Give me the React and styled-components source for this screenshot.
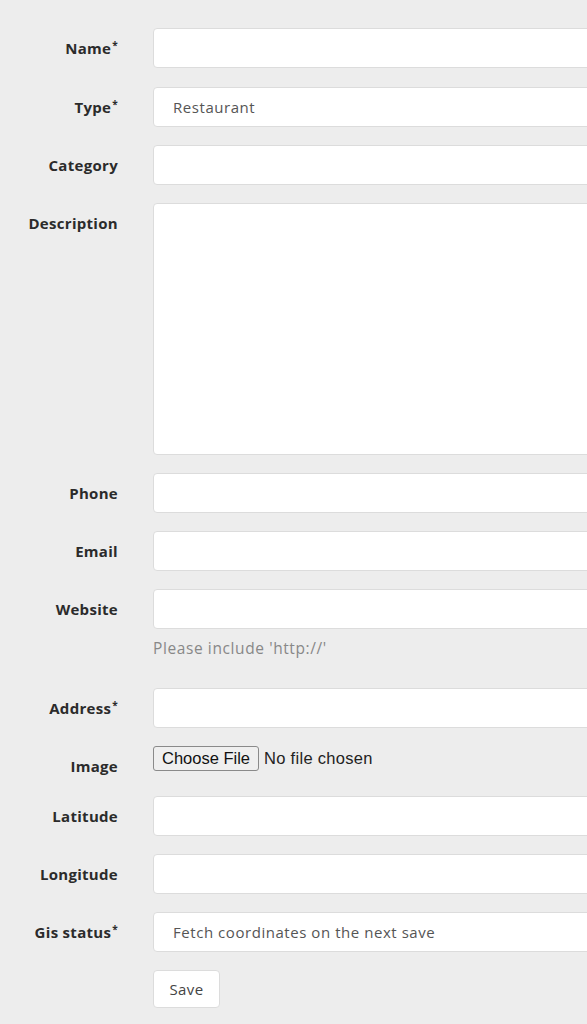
import styled, { createGlobalStyle } from "styled-components";

const Global = createGlobalStyle`
	html, body {
		margin: 0;
		background: #ededed;
		overflow: hidden;
	}
	body {
		font-family: "Open Sans", "Lato", sans-serif;
	}
`;

const Form = styled.form`
	width: 760px;
	padding: 28px 0 0 0;
	display: flex;
	flex-direction: column;
`;

const Row = styled.div`
	display: grid;
	grid-template-columns: 118px 1fr;
	column-gap: 35px;
	margin-bottom: ${(p) => p.$gap || 18}px;
`;

const Label = styled.label`
	text-align: right;
	font-weight: 700;
	font-size: 15px;
	line-height: 20px;
	color: #2b2b2b;
	padding-top: 10px;
	letter-spacing: 0.3px;
	white-space: nowrap;

	sup {
		font-size: 10px;
		vertical-align: top;
		position: relative;
		top: -3px;
		margin-left: 1px;
	}
`;

const Field = styled.div`
	display: flex;
	flex-direction: column;
`;

const Input = styled.input`
	box-sizing: border-box;
	height: 40px;
	width: 100%;
	border: 1px solid #dcdcdc;
	border-radius: 4px;
	background: #fff;
	padding: 0 19px;
	font-family: "Open Sans", "Lato", sans-serif;
	font-size: 15px;
	letter-spacing: 0.55px;
	color: #555;
	outline: none;
`;

const TextArea = styled.textarea`
	box-sizing: border-box;
	height: 252px;
	width: 100%;
	border: 1px solid #dcdcdc;
	border-radius: 4px;
	background: #fff;
	resize: none;
	outline: none;
`;

const Help = styled.div`
	font-size: 15.5px;
	line-height: 20px;
	letter-spacing: 0.6px;
	color: #888;
	margin-top: 9px;
`;

const FileRow = styled.div`
	height: 32px;
	display: flex;
	align-items: flex-start;
`;

const FileButton = styled.span`
	box-sizing: border-box;
	height: 25px;
	padding: 0 8px;
	display: inline-flex;
	align-items: center;
	font-family: "Liberation Sans", Arial, sans-serif;
	font-size: 16.5px;
	color: #111;
	background: #efefef;
	border: 1px solid #8a8a8a;
	border-radius: 3px;
`;

const FileText = styled.span`
	font-family: "Liberation Sans", Arial, sans-serif;
	font-size: 16.5px;
	line-height: 25px;
	letter-spacing: 0.3px;
	color: #222;
	margin-left: 5px;
`;

const SaveButton = styled.button`
	box-sizing: border-box;
	width: 67px;
	height: 38px;
	background: #fff;
	border: 1px solid #dcdcdc;
	border-radius: 4px;
	font-family: "Open Sans", "Lato", sans-serif;
	font-size: 15px;
	letter-spacing: 0.4px;
	color: #444;
`;

const Req = () => <sup>*</sup>;

const App = () => {
	return (
		<>
			<Global />
			<Form onSubmit={(e) => e.preventDefault()}>
				<Row $gap={19}>
					<Label>Name<Req /></Label>
					<Input />
				</Row>
				<Row>
					<Label>Type<Req /></Label>
					<Input defaultValue="Restaurant" />
				</Row>
				<Row>
					<Label>Category</Label>
					<Input />
				</Row>
				<Row>
					<Label>Description</Label>
					<TextArea />
				</Row>
				<Row>
					<Label>Phone</Label>
					<Input />
				</Row>
				<Row>
					<Label>Email</Label>
					<Input />
				</Row>
				<Row $gap={30}>
					<Label>Website</Label>
					<Field>
						<Input />
						<Help>Please include 'http://'</Help>
					</Field>
				</Row>
				<Row>
					<Label>Address<Req /></Label>
					<Input />
				</Row>
				<Row>
					<Label>Image</Label>
					<FileRow>
						<FileButton>Choose File</FileButton>
						<FileText>No file chosen</FileText>
					</FileRow>
				</Row>
				<Row>
					<Label>Latitude</Label>
					<Input />
				</Row>
				<Row>
					<Label>Longitude</Label>
					<Input />
				</Row>
				<Row>
					<Label>Gis status<Req /></Label>
					<Input defaultValue="Fetch coordinates on the next save" />
				</Row>
				<Row>
					<span />
					<div>
						<SaveButton>Save</SaveButton>
					</div>
				</Row>
			</Form>
		</>
	);
};

export default App;
